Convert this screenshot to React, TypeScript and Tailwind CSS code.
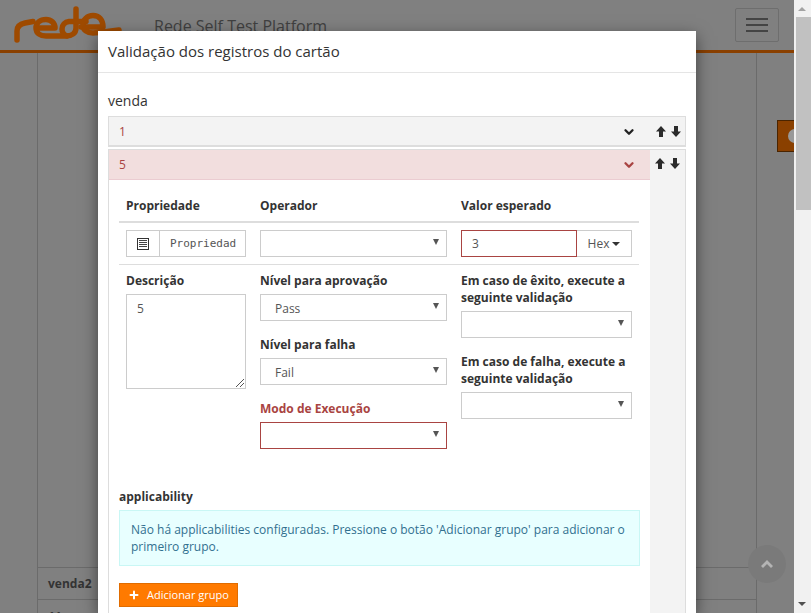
import { ChevronDown, Plus } from 'lucide-react';

const FIELD_BORDER = 'border border-[#ccc]';

function Label({ children, danger }: { children: React.ReactNode; danger?: boolean }) {
  return <p className={`text-[12px] leading-[17px] font-bold ${danger ? 'text-[#a94442]' : 'text-[#333]'}`}>{children}</p>;
}

function Select({ value, danger }: { value?: string; danger?: boolean }) {
  return <div className={`mt-[5px] flex h-[27px] items-center justify-between bg-white pl-[14px] pr-[7px] text-[12px] text-[#555] border ${danger ? 'border-[#a94442]' : 'border-[#ccc]'}`}>
    <span className="pt-[2px]">{value}</span>
    <span className="mb-[3px] h-0 w-0 border-x-[3px] border-t-[6px] border-x-transparent border-t-[#555]" />
  </div>;
}

function ArrowIcon() {
  return <svg width="10" height="11" viewBox="0 0 10 11" className="block"><path d="M5 0 10 5.5H7V11H3V5.5H0Z" fill="#2b2b2b" /></svg>;
}

function Arrows() {
  return <div className="flex items-center gap-[5px]">
    <ArrowIcon />
    <span className="rotate-180"><ArrowIcon /></span>
  </div>;
}

function Logo() {
  return <svg width="122" height="44" viewBox="12 5 122 44" fill="none" stroke="#9e4a00" strokeWidth="5.5" strokeLinecap="round" strokeLinejoin="round">
    <path d="M17 40V31C17 26 20 24 25 23L33 21.5" />
    <path d="M37 28H55C55 23 51 19.5 46 19.5C40 19.5 36 23 36 28C36 33 40 36 46 36H66C72 36 76 33 76 28V9" />
    <path d="M86 21.5H69C65 22 62 25 62 29C62 33 64 35 67 36" />
    <path d="M81 27H103C103 20 99 15.5 93 15.5C87 15.5 83 20 83 25C83 30 87 33 93 33C100 33 110 31 119 30" />
  </svg>;
}

function Background() {
  return <div className="h-full bg-[#808080]">
    <header className="flex h-[53px] items-start border-b-[3px] border-[#8a4000]">
      <div className="mt-[5px] ml-[12px] h-[44px] w-[122px]"><Logo /></div>
      <p className="mt-[15px] ml-[20px] flex-1 text-[16px] leading-[22px] text-[#404040]">Rede Self Test Platform</p>
      <button className="mt-[8px] mr-[15px] flex h-[34px] w-[44px] flex-col items-center justify-center gap-[4px] rounded-[2px] border border-[#6e6e6e]">
        <span className="h-[2px] w-[22px] bg-[#444]" />
        <span className="h-[2px] w-[22px] bg-[#444]" />
        <span className="h-[2px] w-[22px] bg-[#444]" />
      </button>
    </header>
    <div className="mx-[37px] flex h-[560px] flex-col border-x border-[#6b6b6b]">
      <div className="h-[514px] shrink-0" />
      <div className="flex h-[33px] shrink-0 items-center border-y border-[#6b6b6b] px-[10px] text-[12px] font-bold text-[#333]">venda2</div>
      <div className="px-[10px] pt-[8px] text-[12px] font-bold text-[#333]">11</div>
    </div>
  </div>;
}

function RuleBody() {
  return <div className="px-[10px] pt-[17px]">
    <div className="grid grid-cols-[134px_201px_171px] px-[7px] pb-[7px] text-[12px] font-bold leading-[17px] text-[#333]">
      <span>Propriedade</span><span>Operador</span><span>Valor esperado</span>
    </div>
    <div className="mr-[1px] border-y border-[#ddd] border-t-2">
      <div className="grid grid-cols-[134px_201px_171px] px-[7px] py-[7px]">
        <div className={`flex h-[27px] w-[120px] ${FIELD_BORDER} bg-white`}>
          <div className="flex w-[33px] items-center justify-center border-r border-[#ccc]">
            <svg width="12" height="12" viewBox="0 0 12 12"><rect x="0.5" y="0.5" width="11" height="11" fill="#fff" stroke="#333" /><path d="M2 2.5h8M2 4.5h8M2 6.5h8M2 8.5h8" stroke="#444" /></svg>
          </div>
          <span className="flex-1 pl-[10px] font-['DejaVu_Sans_Mono',monospace] text-[11px] leading-[25px] text-[#555]">Propriedad</span>
        </div>
        <div className="pr-[14px]"><div className="-mt-[5px]"><Select /></div></div>
        <div className="flex h-[27px] w-[171px] bg-white">
          <div className="flex-1 border border-[#a94442] pl-[10px] text-[12px] leading-[25px] text-[#555]">3</div>
          <div className="flex w-[55px] items-center justify-center gap-[3px] border border-l-0 border-[#ccc] text-[12px] text-[#555]">Hex<span className="h-0 w-0 border-x-[4px] border-t-[4px] border-x-transparent border-t-[#333]" /></div>
        </div>
      </div>
    </div>
    <div className="grid grid-cols-[134px_201px_171px] px-[7px] pt-[7px]">
      <div>
        <Label>Descrição</Label>
        <div className={`mt-[5px] relative h-[95px] w-[120px] ${FIELD_BORDER} px-[10px] py-[5px] text-[12px] text-[#555]`}>
          5
          <svg width="8" height="8" viewBox="0 0 8 8" className="absolute right-[1px] bottom-[1px]"><path d="M0 8 8 0M4 8l4-4" stroke="#555" /></svg>
        </div>
      </div>
      <div className="flex flex-col pr-[14px]">
        <Label>Nível para aprovação</Label>
        <Select value="Pass" />
        <div className="h-[15px]" />
        <Label>Nível para falha</Label>
        <Select value="Fail" />
        <div className="h-[15px]" />
        <Label danger>Modo de Execução</Label>
        <Select danger />
      </div>
      <div>
        <Label>Em caso de êxito, execute a seguinte validação</Label>
        <Select />
        <div className="h-[15px]" />
        <Label>Em caso de falha, execute a seguinte validação</Label>
        <Select />
      </div>
    </div>
    <div className="mt-[39px] text-[12px] font-bold leading-[17px] text-[#333]">applicability</div>
    <div className="mt-[5px] w-[521px] border border-[#c9f7f5] bg-[#e8ffff] px-[11px] py-[10px] text-[12px] leading-[17px] text-[#31708f]">
      Não há applicabilities configuradas. Pressione o botão 'Adicionar grupo' para adicionar o primeiro grupo.
    </div>
    <button className="mt-[17px] flex h-[24px] w-[119px] items-center gap-[7px] border border-[#e06c00] bg-[#ff7a00] pl-[8px] text-[11px] text-white">
      <Plus size={12} strokeWidth={4} />Adicionar grupo
    </button>
  </div>;
}

function Modal() {
  return <div className="absolute top-[31px] left-[98px] h-[582px] w-[598px] bg-white shadow-[0_5px_15px_rgba(0,0,0,0.5)]">
    <div className="h-[42px] border-b border-[#e5e5e5] px-[10px] text-[15px] leading-[41px] text-[#333]">Validação dos registros do cartão</div>
    <div className="px-[10px] pt-[18px]">
      <p className="text-[14px] leading-[19px] text-[#333]">venda</p>
      <div className="mt-[6px] flex h-[31px] items-center border border-[#ddd] border-b-2 bg-[#f3f3f3] pl-[10px] pt-[1px] text-[12px] text-[#a94442]">
        <span className="flex-1">1</span>
        <ChevronDown size={14} strokeWidth={4} className="mr-[20px] text-[#222]" />
        <span className="mr-[4px]"><Arrows /></span>
      </div>
      <div className="mt-[2px] flex h-[500px] border border-[#ddd]">
        <div className="flex-1 bg-white">
          <div className="flex h-[30px] items-center border-b border-[#ebccd1] bg-[#f2dede] pl-[10px] pr-[14px] text-[12px] text-[#a94442]">
            <span className="flex-1">5</span>
            <ChevronDown size={14} strokeWidth={4} />
          </div>
          <RuleBody />
        </div>
        <div className="flex w-[35px] justify-center bg-[#f3f3f3] pt-[8px]"><div className="h-fit"><Arrows /></div></div>
      </div>
    </div>
  </div>;
}

export default function App() {
  return <div className="relative flex h-[613px] overflow-hidden font-['Open_Sans',sans-serif]">
    <div className="h-full w-[794px]"><Background /></div>
    <div className="absolute top-[120px] left-[777px] h-[32px] w-[17px] overflow-hidden border border-r-0 border-[#4a2400] bg-[#8a4000] pt-[8px] pl-[10px]"><div className="h-[14px] w-[14px] rounded-full bg-[#999]" /></div>
    <div className="relative h-full w-[17px] bg-[#f1f1f1]">
      <div className="ml-[4px] h-0 w-0 translate-y-[7px] border-x-[4px] border-b-[4px] border-x-transparent border-b-[#a3a3a3]" />
      <div className="mt-[13px] ml-[2px] h-[193px] w-[15px] bg-[#c1c1c1]" />
      <div className="absolute right-[5px] bottom-[7px] h-0 w-0 border-x-[4px] border-t-[4px] border-x-transparent border-t-[#505050]" />
    </div>
    <div className="absolute top-[545px] left-[748px] flex h-[38px] w-[38px] items-center justify-center rounded-full bg-[#7a7a7a]">
      <svg width="12" height="8" viewBox="0 0 12 8"><path d="M6 0 12 6 10 8 6 4 2 8 0 6Z" fill="#b4b4b4" /></svg>
    </div>
    <Modal />
  </div>;
}
